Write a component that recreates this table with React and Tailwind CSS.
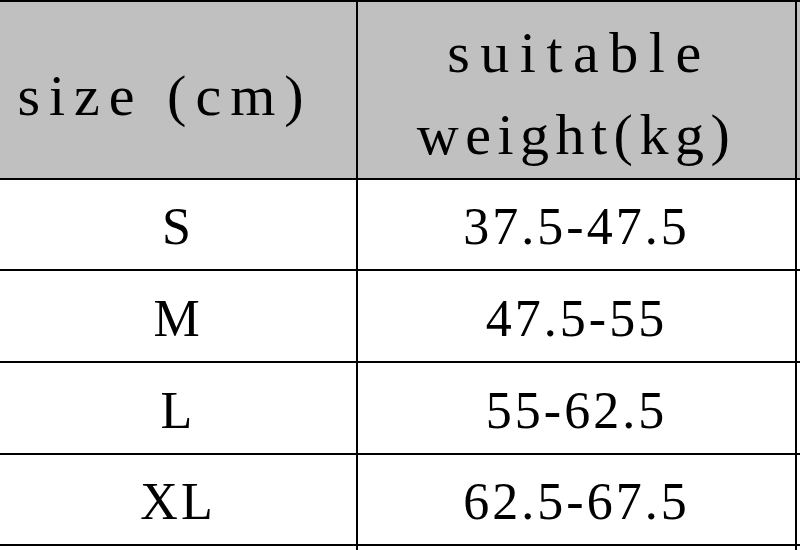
const rows = [
  { size: "S", weight: "37.5-47.5", h: "h-[91px]" },
  { size: "M", weight: "47.5-55", h: "h-[92px]" },
  { size: "L", weight: "55-62.5", h: "h-[92px]" },
  { size: "XL", weight: "62.5-67.5", h: "h-[91px]" },
];

export default function App() {
  return (
    <div className="w-[800px] h-[550px] overflow-hidden bg-white text-black">
      <div className="w-[1000px] border-t-2 border-black">
        {/* header */}
        <div className="flex h-[178px] bg-[#c0c0c0] border-b-2 border-black font-['Liberation_Serif',serif] text-[58px]">
          <div className="w-[358px] shrink-0 border-r-2 border-black flex items-center justify-center pr-[26px] pt-[10px] tracking-[9px]">
            size (cm)
          </div>
          <div className="w-[439px] shrink-0 border-r-2 border-black flex flex-col items-center justify-center leading-[82px] pt-[8px]">
            <span className="tracking-[10.5px] pl-[6px]">suitable</span>
            <span className="tracking-[6.5px]">weight(kg)</span>
          </div>
          <div className="flex-1" />
        </div>

        {/* rows */}
        {rows.map((r) => (
          <div
            key={r.size}
            className={`flex ${r.h} border-b-2 border-black font-['Liberation_Serif',serif] text-[52px] tracking-[3px]`}
          >
            <div className="w-[358px] shrink-0 border-r-2 border-black flex items-center justify-center pt-[5px]">
              {r.size}
            </div>
            <div className="w-[439px] shrink-0 border-r-2 border-black flex items-center justify-center pt-[5px]">
              {r.weight}
            </div>
            <div className="flex-1" />
          </div>
        ))}
        <div className="flex h-[20px]">
          <div className="w-[358px] shrink-0 border-r-2 border-black" />
          <div className="w-[439px] shrink-0 border-r-2 border-black" />
        </div>
      </div>
    </div>
  );
}
